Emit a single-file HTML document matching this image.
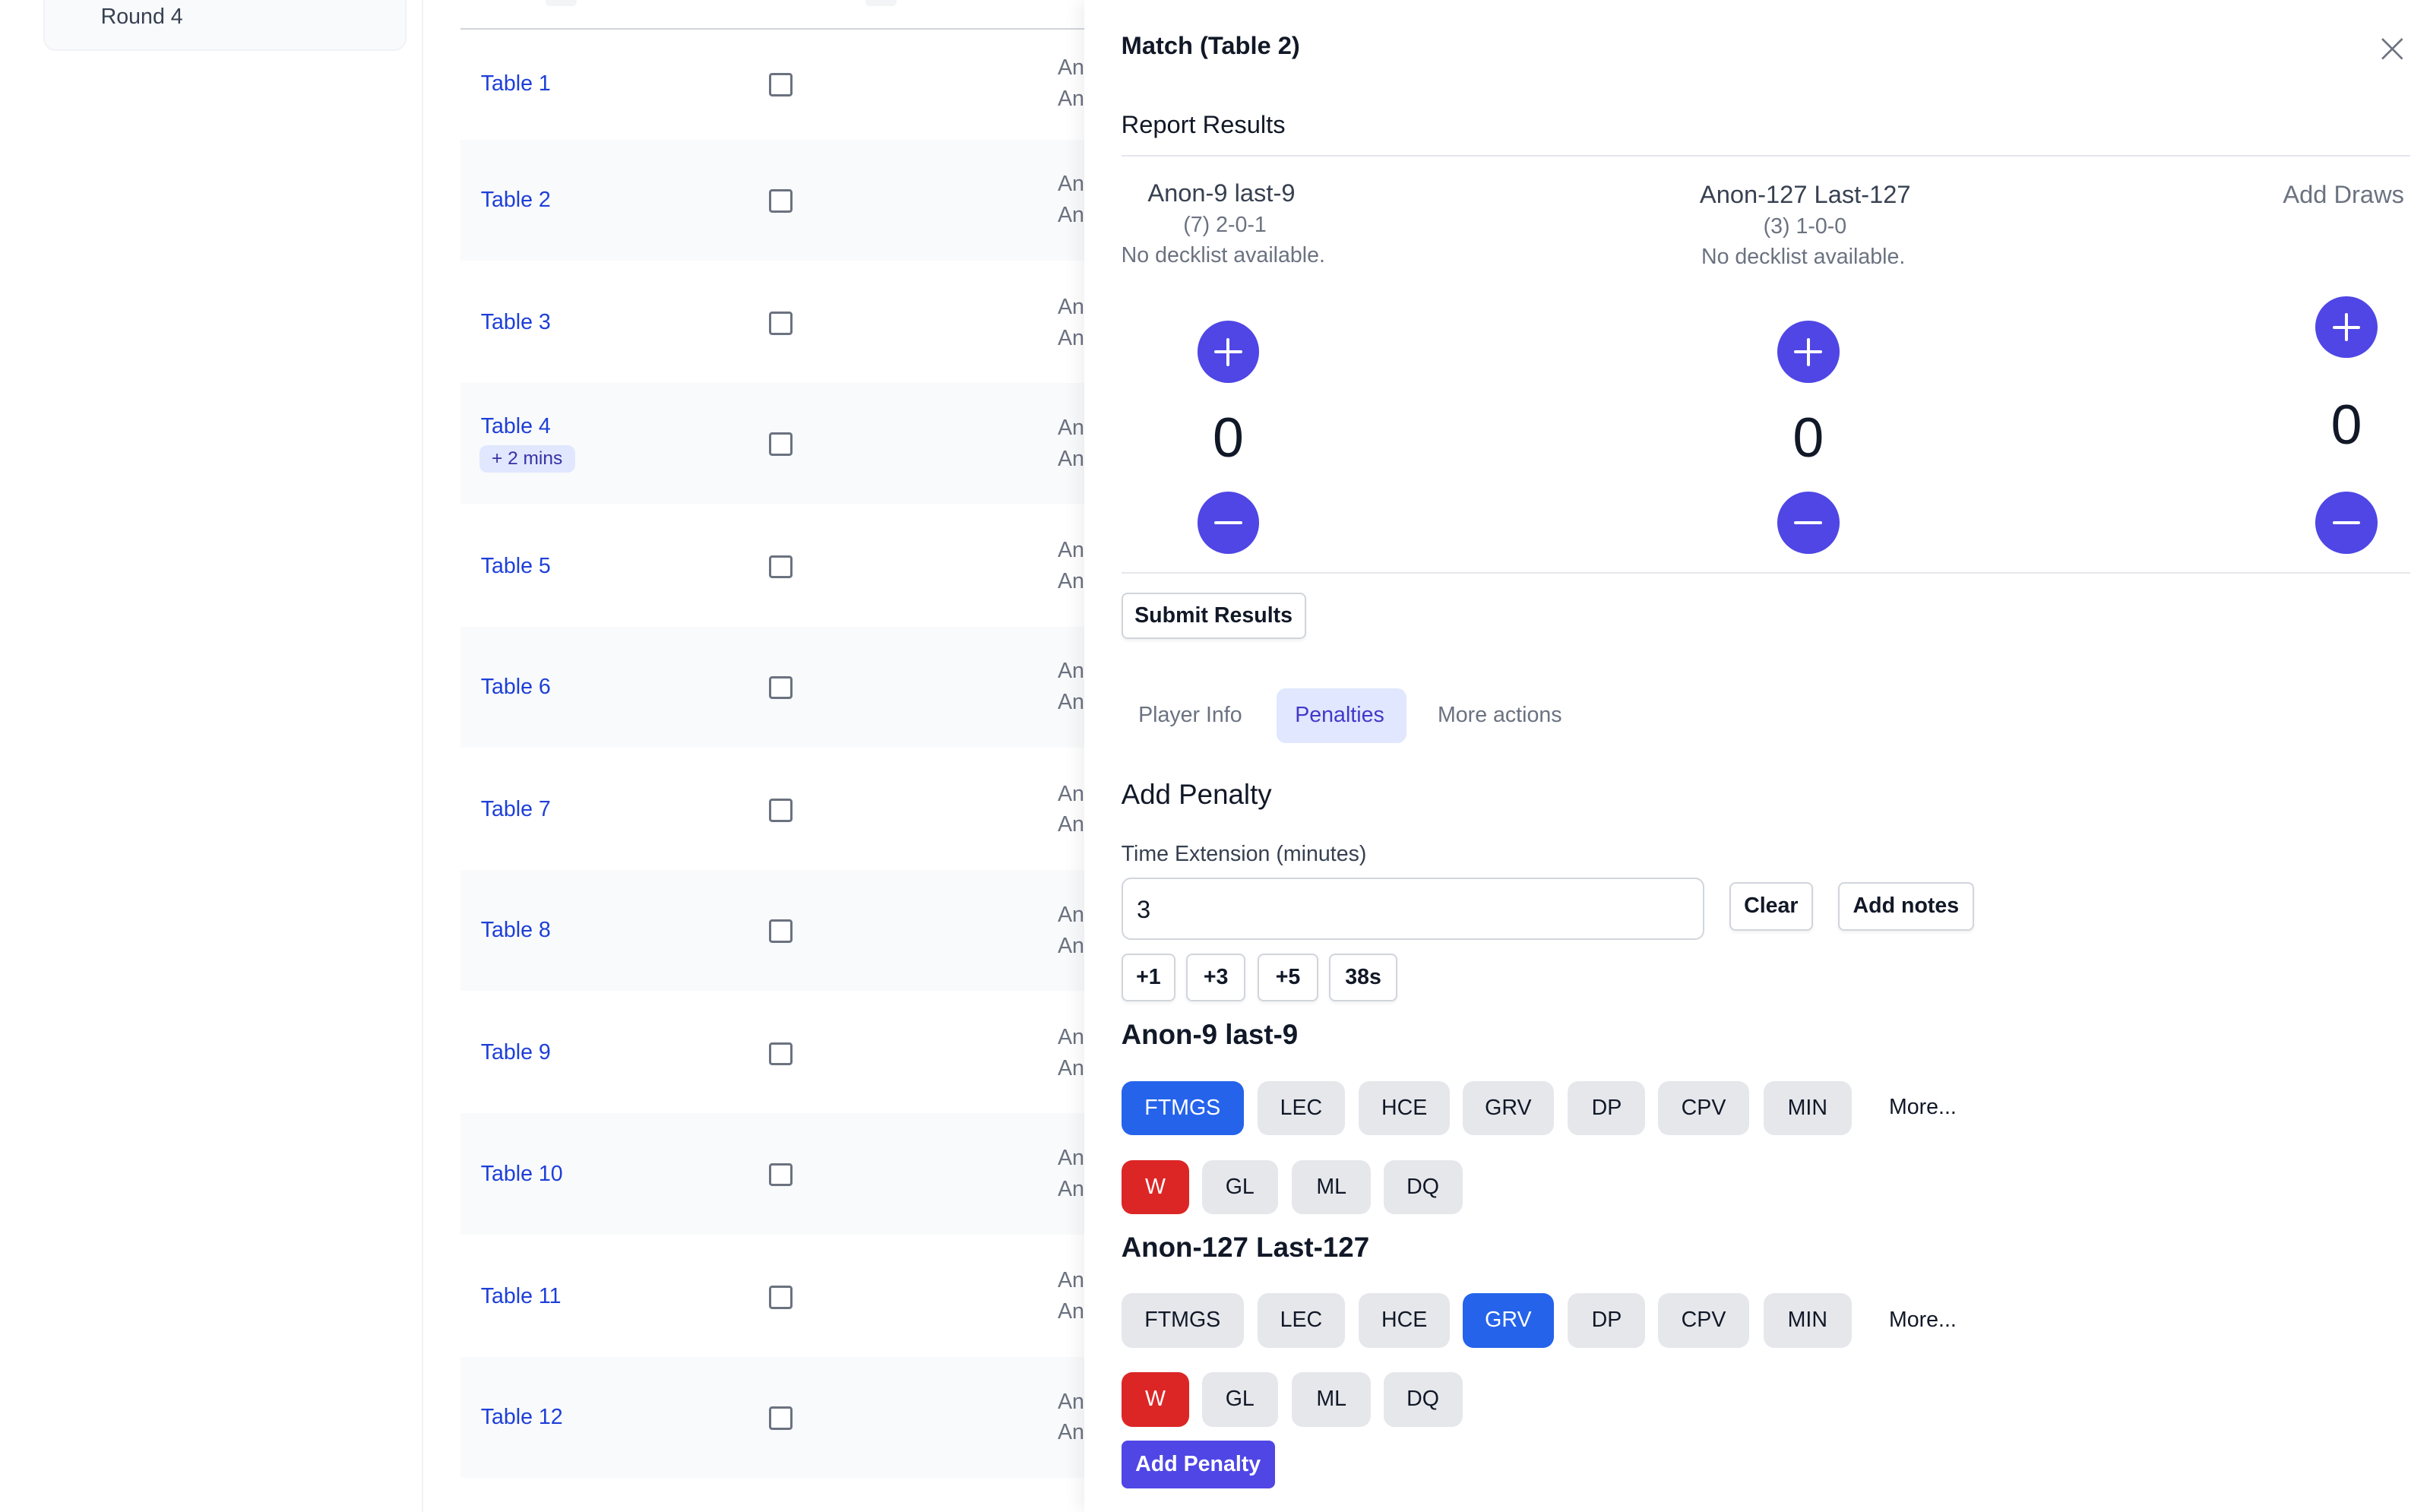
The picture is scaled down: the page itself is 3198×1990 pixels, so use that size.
<!DOCTYPE html>
<html><head><meta charset="utf-8">
<style>
*{box-sizing:border-box;margin:0;padding:0}
html,body{width:3198px;height:1990px;overflow:hidden;background:#fff}
#w{zoom:2.041;width:1567px;height:975px;position:relative;font-family:"Liberation Sans",sans-serif;color:#111827}
.a{position:absolute;white-space:nowrap}
.row{position:absolute;left:297px;width:402px}
.tl{position:absolute;left:13px;color:#1d3fd8;font-size:14px}
.cb{position:absolute;left:199px;width:15px;height:15px;border:1.5px solid #6b7280;border-radius:2px;background:#fff}
.an{position:absolute;left:385px;color:#6b7280;font-size:14px;line-height:20px}
.circ{position:absolute;width:40px;height:40px;border-radius:50%;background:#4f46e5}
.circ:before{content:"";position:absolute;left:11px;top:19px;width:18px;height:2px;background:#fff;border-radius:1px}
.plus:after{content:"";position:absolute;left:19px;top:11px;width:2px;height:18px;background:#fff;border-radius:1px}
.zero{position:absolute;font-size:36px;color:#111827;transform:translateX(-50%)}
.ob{position:absolute;border:1px solid #d1d5db;border-radius:4px;background:#fff;font-size:14px;font-weight:bold;text-align:center;box-shadow:0 1px 2px rgba(0,0,0,.06)}
.pb{position:absolute;height:35px;border-radius:7px;background:#e5e7eb;font-size:14px;color:#111827;text-align:center;line-height:35px}
.sel{background:#2563eb;color:#fff}
.red{background:#dc2626;color:#fff}
</style></head><body><div id="w">
<div class="a" style="left:28px;top:-8px;width:234px;height:41px;background:#f9fafb;border-radius:8px;border:1px solid #f1f2f4"></div>
<div class="a" style="left:65px;top:3px;font-size:14px;color:#374151">Round 4</div>
<div class="a" style="left:272px;top:0;width:1px;height:975px;background:#f1f2f4"></div>
<div class="a" style="left:352px;top:-4px;width:20px;height:8px;background:#f3f4f6;border-radius:3px"></div>
<div class="a" style="left:558px;top:-4px;width:20px;height:8px;background:#f3f4f6;border-radius:3px"></div>
<div class="a" style="left:297px;top:18px;width:402px;height:1px;background:#d1d5db"></div>

<div class="row" style="top:19px;height:71px"><div class="tl" style="top:27px">Table 1</div><div class="cb" style="top:28px"></div><div class="an" style="top:15px">An<br>An</div></div>
<div class="row" style="top:90px;height:78px;background:#f9fafb"><div class="tl" style="top:31px">Table 2</div><div class="cb" style="top:32px"></div><div class="an" style="top:19px">An<br>An</div></div>
<div class="row" style="top:168px;height:79px"><div class="tl" style="top:32px">Table 3</div><div class="cb" style="top:33px"></div><div class="an" style="top:20px">An<br>An</div></div>
<div class="row" style="top:247px;height:78px;background:#f9fafb"><div class="tl" style="top:20px">Table 4</div><div class="a" style="left:12px;top:40px;background:#e0e7ff;color:#3730a3;font-size:12px;padding:2px 8px;border-radius:5px">+ 2 mins</div><div class="cb" style="top:32px"></div><div class="an" style="top:19px">An<br>An</div></div>
<div class="row" style="top:325px;height:79px"><div class="tl" style="top:32px">Table 5</div><div class="cb" style="top:33px"></div><div class="an" style="top:20px">An<br>An</div></div>
<div class="row" style="top:404px;height:78px;background:#f9fafb"><div class="tl" style="top:31px">Table 6</div><div class="cb" style="top:32px"></div><div class="an" style="top:19px">An<br>An</div></div>
<div class="row" style="top:482px;height:79px"><div class="tl" style="top:32px">Table 7</div><div class="cb" style="top:33px"></div><div class="an" style="top:20px">An<br>An</div></div>
<div class="row" style="top:561px;height:78px;background:#f9fafb"><div class="tl" style="top:31px">Table 8</div><div class="cb" style="top:32px"></div><div class="an" style="top:19px">An<br>An</div></div>
<div class="row" style="top:639px;height:79px"><div class="tl" style="top:32px">Table 9</div><div class="cb" style="top:33px"></div><div class="an" style="top:20px">An<br>An</div></div>
<div class="row" style="top:718px;height:78px;background:#f9fafb"><div class="tl" style="top:31px">Table 10</div><div class="cb" style="top:32px"></div><div class="an" style="top:19px">An<br>An</div></div>
<div class="row" style="top:796px;height:79px"><div class="tl" style="top:32px">Table 11</div><div class="cb" style="top:33px"></div><div class="an" style="top:20px">An<br>An</div></div>
<div class="row" style="top:875px;height:78px;background:#f9fafb"><div class="tl" style="top:31px">Table 12</div><div class="cb" style="top:32px"></div><div class="an" style="top:19px">An<br>An</div></div>

<div class="a" style="left:699px;top:0;width:868px;height:975px;background:#fff;box-shadow:-4px 0 10px rgba(0,0,0,.06)"></div>
<div class="a" style="left:723px;top:20px;font-size:16px;font-weight:bold;color:#111827">Match (Table 2)</div>
<svg class="a" style="left:1535px;top:24px" width="15" height="15" viewBox="0 0 15 15"><path d="M1 1L14 14M14 1L1 14" stroke="#6b7280" stroke-width="1.3"/></svg>
<div class="a" style="left:723px;top:71px;font-size:16px;color:#111827">Report Results</div>
<div class="a" style="left:723px;top:100px;width:831px;height:1px;background:#e5e7eb"></div>

<div class="a" style="left:740px;top:115px;font-size:16px;color:#374151">Anon-9 last-9</div>
<div class="a" style="left:763px;top:137px;font-size:14px;color:#6b7280">(7) 2-0-1</div>
<div class="a" style="left:723px;top:157px;font-size:14px;color:#6b7280">No decklist available.</div>
<div class="a" style="left:1096px;top:116px;font-size:16px;color:#374151">Anon-127 Last-127</div>
<div class="a" style="left:1137px;top:138px;font-size:14px;color:#6b7280">(3) 1-0-0</div>
<div class="a" style="left:1097px;top:158px;font-size:14px;color:#6b7280">No decklist available.</div>
<div class="a" style="left:1472px;top:116px;font-size:16px;color:#6b7280">Add Draws</div>

<div class="circ plus" style="left:772px;top:207px"></div>
<div class="circ plus" style="left:1146px;top:207px"></div>
<div class="circ plus" style="left:1493px;top:191px"></div>
<div class="zero" style="left:792px;top:261px">0</div>
<div class="zero" style="left:1166px;top:261px">0</div>
<div class="zero" style="left:1513px;top:253px">0</div>
<div class="circ" style="left:772px;top:317px"></div>
<div class="circ" style="left:1146px;top:317px"></div>
<div class="circ" style="left:1493px;top:317px"></div>
<div class="a" style="left:723px;top:369px;width:831px;height:1px;background:#e5e7eb"></div>

<div class="ob" style="left:723px;top:382px;width:119px;height:30px;line-height:28px">Submit Results</div>

<div class="a" style="left:734px;top:453px;font-size:14px;color:#6b7280">Player Info</div>
<div class="a" style="left:823px;top:444px;width:84px;height:35px;background:#e0e7ff;border-radius:6px"></div>
<div class="a" style="left:835px;top:453px;font-size:14px;color:#4338ca">Penalties</div>
<div class="a" style="left:927px;top:453px;font-size:14px;color:#6b7280">More actions</div>

<div class="a" style="left:723px;top:502px;font-size:18px;color:#111827">Add Penalty</div>
<div class="a" style="left:723px;top:543px;font-size:14px;color:#374151">Time Extension (minutes)</div>
<div class="a" style="left:723px;top:566px;width:376px;height:40px;border:1px solid #d1d5db;border-radius:6px"></div>
<div class="a" style="left:733px;top:577px;font-size:16px;color:#111827">3</div>
<div class="ob" style="left:1115px;top:569px;width:54px;height:31px;line-height:29px">Clear</div>
<div class="ob" style="left:1185px;top:569px;width:88px;height:31px;line-height:29px">Add notes</div>
<div class="ob" style="left:723px;top:615px;width:35px;height:31px;line-height:29px">+1</div>
<div class="ob" style="left:765px;top:615px;width:38px;height:31px;line-height:29px">+3</div>
<div class="ob" style="left:811px;top:615px;width:39px;height:31px;line-height:29px">+5</div>
<div class="ob" style="left:857px;top:615px;width:44px;height:31px;line-height:29px">38s</div>

<div class="a" style="left:723px;top:657px;font-size:18px;font-weight:bold">Anon-9 last-9</div>
<div class="pb sel" style="left:723px;top:697px;width:79px">FTMGS</div>
<div class="pb" style="left:811px;top:697px;width:56px">LEC</div>
<div class="pb" style="left:876px;top:697px;width:59px">HCE</div>
<div class="pb" style="left:943px;top:697px;width:59px">GRV</div>
<div class="pb" style="left:1011px;top:697px;width:50px">DP</div>
<div class="pb" style="left:1069px;top:697px;width:59px">CPV</div>
<div class="pb" style="left:1137px;top:697px;width:57px">MIN</div>
<div class="a" style="left:1218px;top:706px;font-size:14px">More...</div>
<div class="pb red" style="left:723px;top:748px;width:44px">W</div>
<div class="pb" style="left:775px;top:748px;width:49px">GL</div>
<div class="pb" style="left:833px;top:748px;width:51px">ML</div>
<div class="pb" style="left:892px;top:748px;width:51px">DQ</div>

<div class="a" style="left:723px;top:794px;font-size:18px;font-weight:bold">Anon-127 Last-127</div>
<div class="pb" style="left:723px;top:834px;width:79px">FTMGS</div>
<div class="pb" style="left:811px;top:834px;width:56px">LEC</div>
<div class="pb" style="left:876px;top:834px;width:59px">HCE</div>
<div class="pb sel" style="left:943px;top:834px;width:59px">GRV</div>
<div class="pb" style="left:1011px;top:834px;width:50px">DP</div>
<div class="pb" style="left:1069px;top:834px;width:59px">CPV</div>
<div class="pb" style="left:1137px;top:834px;width:57px">MIN</div>
<div class="a" style="left:1218px;top:843px;font-size:14px">More...</div>
<div class="pb red" style="left:723px;top:885px;width:44px">W</div>
<div class="pb" style="left:775px;top:885px;width:49px">GL</div>
<div class="pb" style="left:833px;top:885px;width:51px">ML</div>
<div class="pb" style="left:892px;top:885px;width:51px">DQ</div>

<div class="a" style="left:723px;top:929px;width:99px;height:31px;background:#4f46e5;border-radius:4px;color:#fff;font-size:14px;font-weight:bold;text-align:center;line-height:31px">Add Penalty</div>
</div></body></html>
